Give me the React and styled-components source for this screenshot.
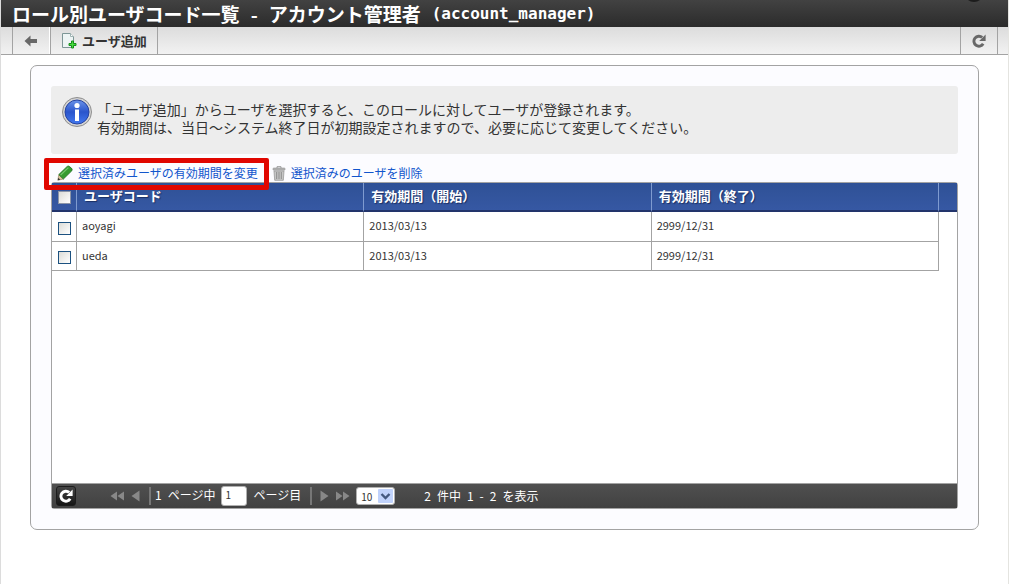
import React, { useState } from 'react'
import styled, { createGlobalStyle } from 'styled-components'

const GlobalStyle = createGlobalStyle`
  * {
    box-sizing: border-box;
  }
  body {
    margin: 0;
    background: #fff;
    color: #333;
    font-family: "Noto Sans CJK JP", "Liberation Sans", sans-serif;
    font-size: 12px;
  }
  button, input, select {
    font-family: inherit;
  }
`

const Page = styled.div`
  min-height: 100vh;
  border-left: 1px solid #dcdcdc;
  border-right: 1px solid #e4e4e0;
`
const TitleBar = styled.header`
  position: relative;
  height: 27px;
  padding-left: 11px;
  overflow: hidden;
  background: linear-gradient(#424242, #2b2b2b);
`
const Title = styled.h1`
  display: flex;
  align-items: center;
  gap: 11px;
  height: 27px;
  margin: 0;
  color: #fff;
  font-size: 19px;
  line-height: 27px;
  white-space: nowrap;
`
const RoleCode = styled.span`
  font-family: "DejaVu Sans Mono", monospace;
  font-size: 16px;
`
const Knob = styled.span`
  position: absolute;
  top: -18px;
  right: 24px;
  width: 20px;
  height: 20px;
  border-radius: 50%;
  background: #1c1c1c;
`
const Toolbar = styled.nav`
  display: flex;
  height: 28px;
  padding: 0 10px 0 11px;
  border-bottom: 1px solid #a3a3a3;
  background: linear-gradient(#dcdcdc, #f2f2f2);
`
const ToolButton = styled.button`
  display: flex;
  align-items: center;
  justify-content: center;
  gap: 5px;
  min-width: 38px;
  padding: 0 10px;
  border: 0;
  border-left: 1px solid #a3a3a3;
  border-right: ${p => (p.$last ? '1px solid #a3a3a3' : '1px solid #fff')};
  background: transparent;
  color: #333;
  font-size: 13px;
  font-weight: bold;
  line-height: 18px;
`
const Spacer = styled.div`
  flex: 1;
`
const Panel = styled.main`
  margin: 10px 29px 0;
  padding: 20px;
  border: 1px solid #a3a3a3;
  border-radius: 7px;
  background: #fcfcff;
`
const Info = styled.section`
  display: flex;
  gap: 4px;
  min-height: 68px;
  padding: 10px;
  border-radius: 3px;
  background: #ededed;
`
const InfoText = styled.p`
  margin: 4px 0 0;
  font-size: 14px;
  line-height: 18px;
`
const Actions = styled.div`
  display: flex;
  align-items: center;
  gap: 14px;
  height: 28px;
  padding: 10px 6px 0;
`
const Action = styled.a`
  position: relative;
  display: flex;
  align-items: center;
  gap: 5px;
  color: #1155cc;
  line-height: 18px;
  text-decoration: none;
  white-space: nowrap;
`
const Marker = styled.span`
  position: absolute;
  inset: -6px -11px -8px -13px;
  border: 5px solid #e00600;
  border-radius: 2px;
  pointer-events: none;
`
const Grid = styled.section`
  border: 1px solid #a3a3a3;
  border-radius: 3px;
  background: #fff;
`
const GridBody = styled.div`
  min-height: 300px;
`
const Table = styled.table`
  width: 100%;
  border-collapse: separate;
  border-spacing: 0;
  table-layout: fixed;
`
const Col = styled.col`
  width: ${p => p.$w || 'auto'};
`
const Th = styled.th`
  height: 29px;
  padding: 0 0 2px ${p => (p.$check ? '0' : '7px')};
  border-right: ${p => (p.$end ? '0' : '1px solid #7f9bd0')};
  border-bottom: 2px solid #22346b;
  background: linear-gradient(#2f5196, #3658a3);
  color: #fff;
  font-size: 13px;
  line-height: 18px;
  text-align: ${p => (p.$check ? 'center' : 'left')};
  text-shadow: 1px 1px 1px #1b2f63;
`
const Td = styled.td`
  height: ${p => (p.$first ? '30px' : '29px')};
  padding: ${p => (p.$check ? '0' : '0 0 3px 5px')};
  border-right: 1px solid #a3a3a3;
  border-bottom: 1px solid #a3a3a3;
  font-size: 11px;
  line-height: 18px;
  text-align: ${p => (p.$check ? 'center' : 'left')};
`
const Blank = styled.td`
  padding: 0;
`
const Check = styled.input`
  appearance: none;
  display: block;
  width: 13px;
  height: 13px;
  margin: 3px auto 0;
  border: 1px solid ${p => (p.$head ? '#8c95a8' : '#1c5180')};
  background: linear-gradient(135deg, #dcdcd7, #fff);
  &:checked {
    background: #1c5180;
  }
`
const Pager = styled.footer`
  display: flex;
  align-items: center;
  height: 25px;
  padding-left: 4px;
  border-top: 1px solid #a3a3a3;
  background: linear-gradient(#505050, #414141);
  color: #fff;
  line-height: 18px;
  white-space: nowrap;
`
const Reload = styled.button`
  display: flex;
  align-items: center;
  justify-content: center;
  width: 20px;
  height: 20px;
  margin-right: 34px;
  padding: 0;
  border: 1px solid #1c1c1c;
  border-radius: 3px;
  background: linear-gradient(#444, #161616);
`
const PageNav = styled.div`
  display: flex;
  align-items: center;
  gap: 7px;
`
const NavButton = styled.button`
  display: flex;
  padding: 0;
  border: 0;
  background: transparent;
`
const PageLabel = styled.label`
  display: flex;
  align-items: center;
  gap: 6px;
  margin: 0 8px 0 9px;
  padding: 0 9px 0 4px;
  border-left: 2px solid #777;
  border-right: 2px solid #777;
  height: 18px;
`
const PageText = styled.span`
  padding-bottom: 3px;
`
const PageInput = styled.input`
  width: 26px;
  height: 20px;
  padding: 0 3px 3px;
  border: 1px solid #b0b0b0;
  border-radius: 3px;
  background: #fff;
  color: #333;
  font-size: 10px;
`
const SelectBox = styled.span`
  position: relative;
  display: flex;
  margin-left: 6px;
`
const Select = styled.select`
  appearance: none;
  width: 39px;
  height: 18px;
  padding: 0 0 0 4px;
  border: 1px solid #b0b0b0;
  border-radius: 3px;
  background: #fff;
  color: #333;
  font-size: 10px;
`
const SelectArrow = styled.svg`
  position: absolute;
  top: 2px;
  right: 2px;
  pointer-events: none;
`
const Summary = styled.div`
  display: flex;
  gap: 6px;
  margin-left: 29px;
`

const BackIcon = () => (
  <svg width="14" height="12" viewBox="0 0 14 12" aria-hidden="true">
    <path d="M0.5 6L6.5 0.5V4H13V8H6.5V11.5Z" fill="#686868" />
  </svg>
)

const AddIcon = () => (
  <svg width="16" height="17" viewBox="0 0 16 17" aria-hidden="true">
    <path d="M1.5 1.5H9.5L12.5 4.5V15.5H1.5Z" fill="#edf4f4" stroke="#7d9696" />
    <path d="M9.5 1.5V4.5H12.5" fill="#fff" stroke="#9fb3b3" />
    <path d="M10.5 9H12.5V11.5H15V13.5H12.5V16H10.5V13.5H8V11.5H10.5Z" fill="#46dd3c" stroke="#168c1b" />
  </svg>
)

const ReloadIcon = ({ size, color }) => (
  <svg width={size} height={size} viewBox="0 0 14 14" aria-hidden="true">
    <path d="M11.2 9.8A5 5 0 1 1 10.2 3.4" fill="none" stroke={color} strokeWidth="2.9" />
    <path d="M13.6 0.6V7H7.2Z" fill={color} />
  </svg>
)

const InfoIcon = () => (
  <svg width="32" height="32" viewBox="0 0 32 32" aria-hidden="true">
    <defs>
      <linearGradient id="infoBall" x1="0" y1="0" x2="0" y2="1">
        <stop offset="0" stopColor="#6b93e8" />
        <stop offset="0.5" stopColor="#2a55cc" />
        <stop offset="1" stopColor="#4379ef" />
      </linearGradient>
    </defs>
    <circle cx="16" cy="16" r="14.5" fill="#d2d2d2" stroke="#8f8f8f" />
    <circle cx="16" cy="16" r="12" fill="url(#infoBall)" stroke="#2643a0" />
    <circle cx="16" cy="9.5" r="2.6" fill="#fff" />
    <rect x="14" y="13.5" width="4" height="11.5" fill="#fff" />
  </svg>
)

const PencilIcon = () => (
  <svg width="16" height="16" viewBox="0 0 16 16" aria-hidden="true">
    <path d="M0.8 15.2L1.8 9.6L6.4 14Z" fill="#dcc49a" stroke="#8d7a58" strokeWidth="0.6" />
    <path d="M0.8 15.2L1.3 12.8L3.2 14.7Z" fill="#333" />
    <path d="M1.8 9.6L10.2 1.4Q11.4 0.6 12.6 1.6L14.8 3.6Q15.6 4.8 14.8 5.8L6.4 14Z" fill="#369b30" stroke="#20701f" strokeWidth="0.8" />
    <path d="M3.6 10L11.4 2.6" stroke="#75c66c" strokeWidth="1.2" />
  </svg>
)

const TrashIcon = () => (
  <svg width="14" height="15" viewBox="0 0 14 15" aria-hidden="true">
    <path d="M5 2V0.7H9V2" fill="none" stroke="#9a9a9a" />
    <rect x="1" y="2" width="12" height="2.2" rx="0.6" fill="#b2b2b2" stroke="#959595" strokeWidth="0.6" />
    <path d="M2 5H12L11.3 14.3H2.7Z" fill="#c6c6c6" stroke="#999" strokeWidth="0.8" />
    <path d="M4.7 6V13M7 6V13M9.3 6V13" stroke="#8c8c8c" />
  </svg>
)

const NavIcon = ({ double, next }) => (
  <svg width={double ? 14 : 9} height="12" viewBox={double ? '0 0 14 12' : '0 0 9 12'} aria-hidden="true">
    <g fill="#888" transform={next ? (double ? 'rotate(180 7 6)' : 'rotate(180 4.5 6)') : undefined}>
      {double ? <path d="M7 1.5V10.5L0.5 6ZM14 1.5V10.5L7.5 6Z" /> : <path d="M8.5 0.5V11.5L0.5 6Z" />}
    </g>
  </svg>
)

const users = [
  { code: 'aoyagi', start: '2013/03/13', end: '2999/12/31' },
  { code: 'ueda', start: '2013/03/13', end: '2999/12/31' },
]

export default function App() {
  const [checked, setChecked] = useState([])
  const [page, setPage] = useState('1')

  const toggle = (code) => {
    setChecked(checked.includes(code) ? checked.filter(c => c !== code) : [...checked, code])
  }
  const toggleAll = () => {
    setChecked(checked.length === users.length ? [] : users.map(u => u.code))
  }

  return (
    <Page>
      <GlobalStyle />
      <TitleBar>
        <Title>
          <span>ロール別ユーザコード一覧</span>
          <span>-</span>
          <span>アカウント管理者</span>
          <RoleCode>(account_manager)</RoleCode>
        </Title>
        <Knob />
      </TitleBar>
      <Toolbar>
        <ToolButton aria-label="戻る"><BackIcon /></ToolButton>
        <ToolButton $last><AddIcon />ユーザ追加</ToolButton>
        <Spacer />
        <ToolButton $last aria-label="更新"><ReloadIcon size={14} color="#686868" /></ToolButton>
      </Toolbar>
      <Panel>
        <Info>
          <InfoIcon />
          <InfoText>
            「ユーザ追加」からユーザを選択すると、このロールに対してユーザが登録されます。<br />
            有効期間は、当日～システム終了日が初期設定されますので、必要に応じて変更してください。
          </InfoText>
        </Info>
        <Actions>
          <Action href="#edit">
            <PencilIcon />選択済みユーザの有効期間を変更
            <Marker />
          </Action>
          <Action href="#delete"><TrashIcon />選択済みのユーザを削除</Action>
        </Actions>
        <Grid>
          <GridBody>
            <Table>
              <colgroup>
                <Col $w="25px" />
                <Col />
                <Col />
                <Col />
                <Col $w="18px" />
              </colgroup>
              <thead>
                <tr>
                  <Th $check>
                    <Check
                      $head
                      type="checkbox"
                      aria-label="すべて選択"
                      checked={checked.length === users.length}
                      onChange={toggleAll}
                    />
                  </Th>
                  <Th>ユーザコード</Th>
                  <Th>有効期間（開始）</Th>
                  <Th>有効期間（終了）</Th>
                  <Th $end />
                </tr>
              </thead>
              <tbody>
                {users.map((u, idx) => (
                  <tr key={u.code}>
                    <Td $check $first={idx === 0}>
                      <Check
                        type="checkbox"
                        aria-label={u.code}
                        checked={checked.includes(u.code)}
                        onChange={() => toggle(u.code)}
                      />
                    </Td>
                    <Td>{u.code}</Td>
                    <Td>{u.start}</Td>
                    <Td>{u.end}</Td>
                    <Blank />
                  </tr>
                ))}
              </tbody>
            </Table>
          </GridBody>
          <Pager>
            <Reload aria-label="再読み込み"><ReloadIcon size={14} color="#fff" /></Reload>
            <PageNav>
              <NavButton aria-label="最初のページ"><NavIcon double /></NavButton>
              <NavButton aria-label="前のページ"><NavIcon /></NavButton>
            </PageNav>
            <PageLabel>
              <PageText>1</PageText>
              <PageText>ページ中</PageText>
              <PageInput type="text" value={page} onChange={(e) => setPage(e.target.value)} />
              <PageText>ページ目</PageText>
            </PageLabel>
            <PageNav>
              <NavButton aria-label="次のページ"><NavIcon next /></NavButton>
              <NavButton aria-label="最後のページ"><NavIcon double next /></NavButton>
            </PageNav>
            <SelectBox>
              <Select aria-label="表示件数" defaultValue="10">
                <option>10</option>
                <option>20</option>
                <option>50</option>
              </Select>
              <SelectArrow width="15" height="14" viewBox="0 0 15 14">
                <rect width="15" height="14" rx="1" fill="#c0d2fb" />
                <path d="M3.5 5L7.5 9L11.5 5" fill="none" stroke="#43587f" strokeWidth="2.4" />
              </SelectArrow>
            </SelectBox>
            <Summary>
              <span>2</span>
              <span>件中</span>
              <span>1</span>
              <span>-</span>
              <span>2</span>
              <span>を表示</span>
            </Summary>
          </Pager>
        </Grid>
      </Panel>
    </Page>
  )
}
